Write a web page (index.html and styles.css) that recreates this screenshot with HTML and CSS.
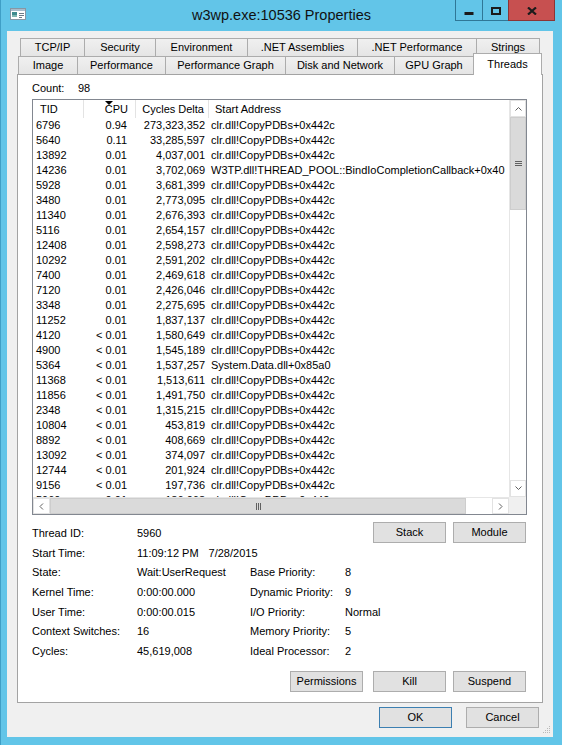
FILE: index.html
```html
<!DOCTYPE html>
<html>
<head>
<meta charset="utf-8">
<title>w3wp.exe:10536 Properties</title>
<link rel="stylesheet" href="styles.css">
</head>
<body>
<div class="window">
  <div class="titlebar">
    <div class="app-icon">
      <svg width="16" height="12" viewBox="0 0 16 12">
        <rect x="0.5" y="0.5" width="15" height="11" fill="#ffffff" stroke="#8797a4"/>
        <rect x="1" y="1" width="14" height="2" fill="#a9bccb"/>
        <rect x="2" y="4" width="5" height="5" fill="#3f8b8e"/>
        <rect x="2" y="7" width="5" height="2" fill="#7fb7b3"/>
        <path d="M9 5.5h5M9 7.5h5M9 9.5h3" stroke="#6d7a85" stroke-width="1"/>
      </svg>
    </div>
    <div class="title">w3wp.exe:10536 Properties</div>
    <div class="caption-buttons">
      <div class="cap-btn cap-min">
        <svg width="10" height="8" viewBox="0 0 10 8"><rect x="0.5" y="5" width="9" height="3" fill="#1b1b1b"/></svg>
      </div>
      <div class="cap-btn cap-max">
        <svg width="10" height="8" viewBox="0 0 10 8"><rect x="1" y="1" width="8" height="6" fill="none" stroke="#1b1b1b" stroke-width="2"/></svg>
      </div>
      <div class="cap-btn cap-close">
        <svg width="10" height="8" viewBox="0 0 10 8"><path d="M1 0.5L9 7.5M9 0.5L1 7.5" stroke="#1b1b1b" stroke-width="2.2"/></svg>
      </div>
    </div>
  </div>

  <div class="client">
    <div class="tabrow tabrow-back">
      <div class="tab tab-tcp">TCP/IP</div>
      <div class="tab tab-security">Security</div>
      <div class="tab tab-env">Environment</div>
      <div class="tab tab-asm">.NET Assemblies</div>
      <div class="tab tab-netperf">.NET Performance</div>
      <div class="tab tab-strings">Strings</div>
    </div>
    <div class="tabrow tabrow-front">
      <div class="tab tab-image">Image</div>
      <div class="tab tab-perf">Performance</div>
      <div class="tab tab-graph">Performance Graph</div>
      <div class="tab tab-disk">Disk and Network</div>
      <div class="tab tab-gpu">GPU Graph</div>
      <div class="tab tab-threads selected">Threads</div>
    </div>

    <div class="panel">
      <div class="count"><span class="count-label">Count:</span><span>98</span></div>

      <div class="listview">
        <div class="lv-body">
          <div class="lv-header">
            <div class="hcell c-tid">TID</div>
            <div class="hcell c-cpu"><span class="sort-arrow"></span>CPU</div>
            <div class="hcell c-cyc">Cycles Delta</div>
            <div class="hcell c-addr">Start Address</div>
          </div>
          <div class="lv-row"><div class="c-tid">6796</div><div class="c-cpu">0.94</div><div class="c-cyc">273,323,352</div><div class="c-addr">clr.dll!CopyPDBs+0x442c</div></div>
          <div class="lv-row"><div class="c-tid">5640</div><div class="c-cpu">0.11</div><div class="c-cyc">33,285,597</div><div class="c-addr">clr.dll!CopyPDBs+0x442c</div></div>
          <div class="lv-row"><div class="c-tid">13892</div><div class="c-cpu">0.01</div><div class="c-cyc">4,037,001</div><div class="c-addr">clr.dll!CopyPDBs+0x442c</div></div>
          <div class="lv-row"><div class="c-tid">14236</div><div class="c-cpu">0.01</div><div class="c-cyc">3,702,069</div><div class="c-addr">W3TP.dll!THREAD_POOL::BindIoCompletionCallback+0x40</div></div>
          <div class="lv-row"><div class="c-tid">5928</div><div class="c-cpu">0.01</div><div class="c-cyc">3,681,399</div><div class="c-addr">clr.dll!CopyPDBs+0x442c</div></div>
          <div class="lv-row"><div class="c-tid">3480</div><div class="c-cpu">0.01</div><div class="c-cyc">2,773,095</div><div class="c-addr">clr.dll!CopyPDBs+0x442c</div></div>
          <div class="lv-row"><div class="c-tid">11340</div><div class="c-cpu">0.01</div><div class="c-cyc">2,676,393</div><div class="c-addr">clr.dll!CopyPDBs+0x442c</div></div>
          <div class="lv-row"><div class="c-tid">5116</div><div class="c-cpu">0.01</div><div class="c-cyc">2,654,157</div><div class="c-addr">clr.dll!CopyPDBs+0x442c</div></div>
          <div class="lv-row"><div class="c-tid">12408</div><div class="c-cpu">0.01</div><div class="c-cyc">2,598,273</div><div class="c-addr">clr.dll!CopyPDBs+0x442c</div></div>
          <div class="lv-row"><div class="c-tid">10292</div><div class="c-cpu">0.01</div><div class="c-cyc">2,591,202</div><div class="c-addr">clr.dll!CopyPDBs+0x442c</div></div>
          <div class="lv-row"><div class="c-tid">7400</div><div class="c-cpu">0.01</div><div class="c-cyc">2,469,618</div><div class="c-addr">clr.dll!CopyPDBs+0x442c</div></div>
          <div class="lv-row"><div class="c-tid">7120</div><div class="c-cpu">0.01</div><div class="c-cyc">2,426,046</div><div class="c-addr">clr.dll!CopyPDBs+0x442c</div></div>
          <div class="lv-row"><div class="c-tid">3348</div><div class="c-cpu">0.01</div><div class="c-cyc">2,275,695</div><div class="c-addr">clr.dll!CopyPDBs+0x442c</div></div>
          <div class="lv-row"><div class="c-tid">11252</div><div class="c-cpu">0.01</div><div class="c-cyc">1,837,137</div><div class="c-addr">clr.dll!CopyPDBs+0x442c</div></div>
          <div class="lv-row"><div class="c-tid">4120</div><div class="c-cpu">&lt; 0.01</div><div class="c-cyc">1,580,649</div><div class="c-addr">clr.dll!CopyPDBs+0x442c</div></div>
          <div class="lv-row"><div class="c-tid">4900</div><div class="c-cpu">&lt; 0.01</div><div class="c-cyc">1,545,189</div><div class="c-addr">clr.dll!CopyPDBs+0x442c</div></div>
          <div class="lv-row"><div class="c-tid">5364</div><div class="c-cpu">&lt; 0.01</div><div class="c-cyc">1,537,257</div><div class="c-addr">System.Data.dll+0x85a0</div></div>
          <div class="lv-row"><div class="c-tid">11368</div><div class="c-cpu">&lt; 0.01</div><div class="c-cyc">1,513,611</div><div class="c-addr">clr.dll!CopyPDBs+0x442c</div></div>
          <div class="lv-row"><div class="c-tid">11856</div><div class="c-cpu">&lt; 0.01</div><div class="c-cyc">1,491,750</div><div class="c-addr">clr.dll!CopyPDBs+0x442c</div></div>
          <div class="lv-row"><div class="c-tid">2348</div><div class="c-cpu">&lt; 0.01</div><div class="c-cyc">1,315,215</div><div class="c-addr">clr.dll!CopyPDBs+0x442c</div></div>
          <div class="lv-row"><div class="c-tid">10804</div><div class="c-cpu">&lt; 0.01</div><div class="c-cyc">453,819</div><div class="c-addr">clr.dll!CopyPDBs+0x442c</div></div>
          <div class="lv-row"><div class="c-tid">8892</div><div class="c-cpu">&lt; 0.01</div><div class="c-cyc">408,669</div><div class="c-addr">clr.dll!CopyPDBs+0x442c</div></div>
          <div class="lv-row"><div class="c-tid">13092</div><div class="c-cpu">&lt; 0.01</div><div class="c-cyc">374,097</div><div class="c-addr">clr.dll!CopyPDBs+0x442c</div></div>
          <div class="lv-row"><div class="c-tid">12744</div><div class="c-cpu">&lt; 0.01</div><div class="c-cyc">201,924</div><div class="c-addr">clr.dll!CopyPDBs+0x442c</div></div>
          <div class="lv-row"><div class="c-tid">9156</div><div class="c-cpu">&lt; 0.01</div><div class="c-cyc">197,736</div><div class="c-addr">clr.dll!CopyPDBs+0x442c</div></div>
          <div class="lv-row"><div class="c-tid">5960</div><div class="c-cpu">&lt; 0.01</div><div class="c-cyc">186,068</div><div class="c-addr">clr.dll!CopyPDBs+0x442c</div></div>
        </div>

        <div class="vscroll">
          <div class="sb-btn">
            <svg width="7" height="5" viewBox="0 0 7 5"><polyline points="0.5,4.5 3.5,1.5 6.5,4.5" fill="none" stroke="#606060"/></svg>
          </div>
          <div class="sb-thumb-v">
            <svg width="7" height="5" viewBox="0 0 7 5"><path d="M0 0.5h7M0 2.5h7M0 4.5h7" stroke="#606060"/></svg>
          </div>
          <div class="sb-track"></div>
          <div class="sb-btn">
            <svg width="7" height="5" viewBox="0 0 7 5"><polyline points="0.5,0.5 3.5,3.5 6.5,0.5" fill="none" stroke="#606060"/></svg>
          </div>
        </div>

        <div class="hscroll">
          <div class="sb-btn">
            <svg width="5" height="7" viewBox="0 0 5 7"><polyline points="4,0.5 1,3.5 4,6.5" fill="none" stroke="#606060"/></svg>
          </div>
          <div class="sb-thumb-h">
            <svg width="5" height="7" viewBox="0 0 5 7"><path d="M0.5 0v7M2.5 0v7M4.5 0v7" stroke="#606060"/></svg>
          </div>
          <div class="sb-track"></div>
          <div class="sb-btn">
            <svg width="5" height="7" viewBox="0 0 5 7"><polyline points="1,0.5 4,3.5 1,6.5" fill="none" stroke="#606060"/></svg>
          </div>
        </div>
        <div class="sb-corner"></div>
      </div>

      <div class="info">
        <div class="lbl">Thread ID:</div>
        <div class="val">5960</div>
        <div class="row-buttons">
          <div class="btn">Stack</div>
          <div class="btn">Module</div>
        </div>

        <div class="lbl">Start Time:</div>
        <div class="val val-wide"><span class="time">11:09:12 PM</span><span>7/28/2015</span></div>

        <div class="lbl">State:</div>
        <div class="val">Wait:UserRequest</div>
        <div class="lbl">Base Priority:</div>
        <div class="val">8</div>

        <div class="lbl">Kernel Time:</div>
        <div class="val">0:00:00.000</div>
        <div class="lbl">Dynamic Priority:</div>
        <div class="val">9</div>

        <div class="lbl">User Time:</div>
        <div class="val">0:00:00.015</div>
        <div class="lbl">I/O Priority:</div>
        <div class="val">Normal</div>

        <div class="lbl">Context Switches:</div>
        <div class="val">16</div>
        <div class="lbl">Memory Priority:</div>
        <div class="val">5</div>

        <div class="lbl">Cycles:</div>
        <div class="val">45,619,008</div>
        <div class="lbl">Ideal Processor:</div>
        <div class="val">2</div>
      </div>

      <div class="action-buttons">
        <div class="btn btn-perm">Permissions</div>
        <div class="btn">Kill</div>
        <div class="btn">Suspend</div>
      </div>
    </div>

    <div class="dialog-buttons">
      <div class="btn btn-default">OK</div>
      <div class="btn">Cancel</div>
    </div>

    <div class="size-grip">
      <svg width="8" height="8" viewBox="0 0 8 8" fill="#b9b9b9">
        <rect x="6" y="0" width="1" height="1"/>
        <rect x="4" y="2" width="1" height="1"/><rect x="6" y="2" width="1" height="1"/>
        <rect x="2" y="4" width="1" height="1"/><rect x="4" y="4" width="1" height="1"/><rect x="6" y="4" width="1" height="1"/>
        <rect x="0" y="6" width="1" height="1"/><rect x="2" y="6" width="1" height="1"/><rect x="4" y="6" width="1" height="1"/><rect x="6" y="6" width="1" height="1"/>
      </svg>
    </div>
  </div>
</div>
</body>
</html>
```

FILE: styles.css
```css
html, body {
  margin: 0;
  padding: 0;
}

body {
  width: 562px;
  height: 745px;
  overflow: hidden;
  font-family: "Liberation Sans", Arial, sans-serif;
  font-size: 11px;
  color: #000;
}

.window {
  box-sizing: border-box;
  width: 562px;
  height: 745px;
  background: #62c5e8;
  border-left: 1px solid #3f9fc6;
  display: flex;
  flex-direction: column;
}

/* ---------- title bar ---------- */
.titlebar {
  height: 31px;
  flex: none;
  display: grid;
  grid-template-columns: 1fr auto 1fr;
  align-items: start;
}

.app-icon {
  padding: 8px 0 0 9px;
  height: 12px;
}

.app-icon svg {
  display: block;
}

.title {
  font-size: 14.5px;
  line-height: 31px;
  color: #111;
  white-space: nowrap;
}

.caption-buttons {
  justify-self: end;
  display: flex;
  margin-right: 7px;
}

.cap-btn {
  box-sizing: border-box;
  height: 21px;
  border: 1px solid #2f7797;
  border-top: none;
  display: flex;
  justify-content: center;
  padding-top: 7px;
  background: #62c5e8;
}

.cap-btn svg {
  display: block;
}

.cap-min {
  width: 28px;
}

.cap-max {
  width: 27px;
  margin-left: -1px;
}

.cap-close {
  width: 47px;
  margin-left: -1px;
  background: #c75050;
  border-color: #8c3434;
}

/* ---------- client area ---------- */
.client {
  position: relative;
  flex: 1;
  margin: 0 9px 8px 6px;
  background: #f0f0f0;
  padding: 7px 10px 0 10px;
  display: flex;
  flex-direction: column;
}

.tabrow {
  display: flex;
  height: 18px;
  align-items: flex-start;
}

.tabrow-back {
  margin-left: 3px;
}

.tabrow-front {
  margin-left: 1px;
}

.tab {
  box-sizing: border-box;
  height: 18px;
  border: 1px solid #acacac;
  border-bottom: none;
  background: linear-gradient(#f0f0f0, #e5e5e5);
  text-align: center;
  line-height: 17px;
  white-space: nowrap;
  margin-left: -1px;
}

.tab:first-child {
  margin-left: 0;
}

.tab-tcp { width: 65px; }
.tab-security { width: 72px; }
.tab-env { width: 93px; }
.tab-asm { width: 111px; }
.tab-netperf { width: 120px; }
.tab-strings { width: 64px; }

.tab-image { width: 60px; }
.tab-perf { width: 89px; }
.tab-graph { width: 121px; }
.tab-disk { width: 110px; }
.tab-gpu { width: 80px; }
.tab-threads { width: 69px; }

.tab.selected {
  position: relative;
  z-index: 1;
  height: 22px;
  margin-top: -3px;
  padding-top: 2px;
  background: #fff;
}

/* ---------- tab panel ---------- */
.panel {
  box-sizing: border-box;
  width: 526px;
  height: 629px;
  border: 1px solid #a3a3a3;
  background: #fff;
  display: flex;
  flex-direction: column;
}

.count {
  margin: 5px 0 0 14px;
  line-height: 17px;
  height: 17px;
}

.count-label {
  display: inline-block;
  width: 46px;
}

/* ---------- list view ---------- */
.listview {
  box-sizing: border-box;
  margin: 2px 0 0 14px;
  width: 495px;
  height: 416px;
  border: 1px solid #828790;
  background: #fff;
  display: grid;
  grid-template-columns: 1fr 17px;
  grid-template-rows: 1fr 17px;
}

.lv-body {
  overflow: hidden;
  white-space: nowrap;
}

.lv-header,
.lv-row {
  display: grid;
  grid-template-columns: 51px 52px 73px 1fr;
}

.lv-header {
  height: 18px;
  line-height: 18px;
}

.hcell {
  box-sizing: border-box;
  border-right: 1px solid #e3e3e3;
  position: relative;
}

.hcell.c-tid { padding-left: 7px; }
.hcell.c-cpu { text-align: right; padding-right: 7px; }
.hcell.c-cyc { text-align: right; padding-right: 4px; }
.hcell.c-addr { padding-left: 6px; border-right: none; }

.sort-arrow {
  position: absolute;
  top: 1px;
  left: 21px;
  width: 0;
  height: 0;
  border-left: 4px solid transparent;
  border-right: 4px solid transparent;
  border-top: 4px solid #000;
}

.lv-row {
  height: 15px;
  line-height: 15px;
}

.lv-row .c-tid { padding-left: 3px; }
.lv-row .c-cpu { text-align: right; padding-right: 9px; }
.lv-row .c-cyc { text-align: right; padding-right: 4px; }
.lv-row .c-addr { padding-left: 2px; }

/* ---------- scrollbars ---------- */
.vscroll {
  display: flex;
  flex-direction: column;
  background: #fff;
  border-left: 1px solid #e6e6e6;
}

.hscroll {
  display: flex;
  background: #fff;
  border-top: 1px solid #e6e6e6;
}

.sb-btn {
  box-sizing: border-box;
  flex: none;
  width: 17px;
  height: 17px;
  border: 1px solid #e2e2e2;
  background: #fff;
  display: flex;
  align-items: center;
  justify-content: center;
}

.vscroll .sb-btn {
  width: auto;
}

.hscroll .sb-btn {
  height: auto;
}

.sb-btn svg,
.sb-thumb-v svg,
.sb-thumb-h svg {
  display: block;
}

.sb-thumb-v {
  box-sizing: border-box;
  height: 93px;
  flex: none;
  background: #dadada;
  border: 1px solid #cdcdcd;
  display: flex;
  align-items: center;
  justify-content: center;
}

.sb-thumb-h {
  box-sizing: border-box;
  width: 416px;
  flex: none;
  background: #dadada;
  border: 1px solid #cdcdcd;
  display: flex;
  align-items: center;
  justify-content: center;
}

.sb-track {
  flex: 1;
}

.sb-corner {
  background: #f0f0f0;
}

/* ---------- thread info ---------- */
.info {
  margin: 7px 16px 0 14px;
  display: grid;
  grid-template-columns: 105px 113px 95px 1fr;
  grid-template-rows: 21px 19px 20px 20px 19px 19px 21px;
  align-items: center;
  white-space: nowrap;
}

.val-wide {
  grid-column: 2 / 5;
}

.time {
  margin-right: 10px;
}

.row-buttons {
  grid-column: 3 / 5;
  display: flex;
  justify-content: flex-end;
  gap: 7px;
  align-self: start;
}

.btn {
  box-sizing: border-box;
  width: 73px;
  height: 21px;
  line-height: 19px;
  text-align: center;
  background: #e1e1e1;
  border: 1px solid #adadad;
}

.action-buttons {
  margin: 10px 16px 0 0;
  display: flex;
  justify-content: flex-end;
  gap: 7px;
}

.btn-perm {
  margin-right: 3px;
}

.dialog-buttons {
  margin: 4px 4px 0 0;
  display: flex;
  justify-content: flex-end;
  gap: 14px;
}

.btn-default {
  border-color: #3c7fb1;
}

.size-grip {
  position: absolute;
  right: 2px;
  bottom: 3px;
  width: 8px;
  height: 8px;
}

.size-grip svg {
  display: block;
}
```
